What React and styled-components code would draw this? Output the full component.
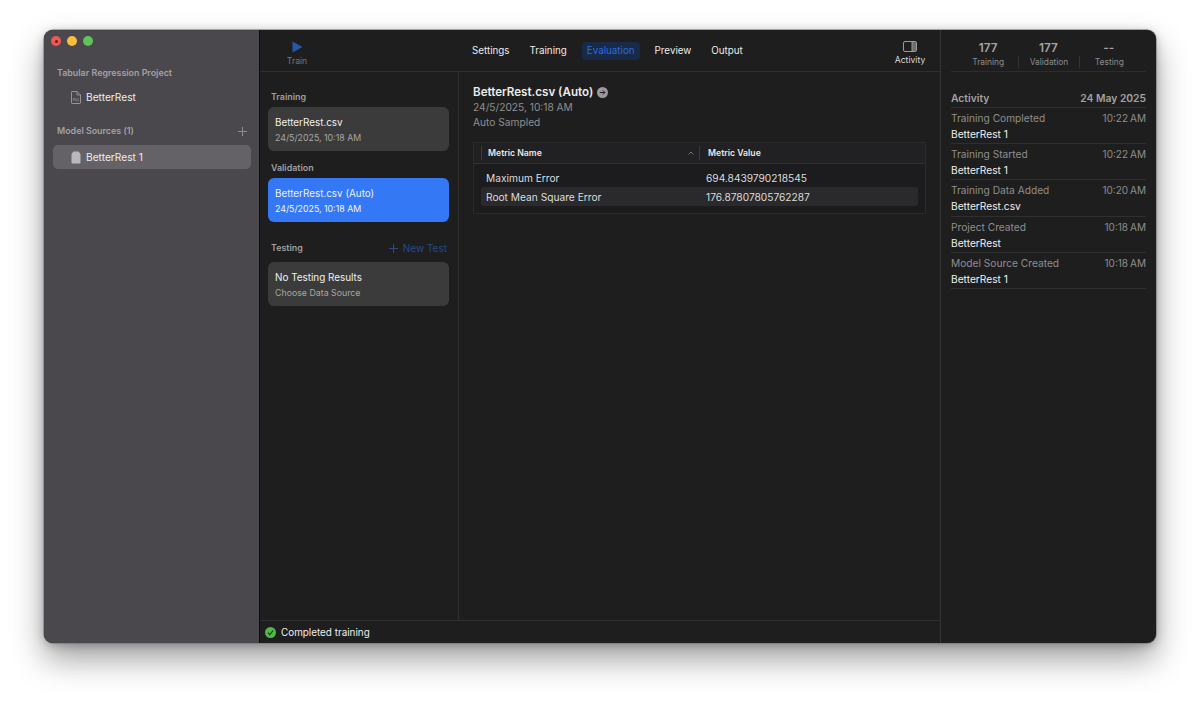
import React from "react";
import styled, { createGlobalStyle } from "styled-components";

const Global = createGlobalStyle`
  html, body { margin: 0; padding: 0; background: #fff; }
  body { font-family: Inter, "Liberation Sans", sans-serif; -webkit-font-smoothing: antialiased; }
  * { box-sizing: border-box; }
`;

const Page = styled.div`
  width: 1200px;
  height: 702px;
  padding: 30px 44px 59px;
  overflow: hidden;
`;
const Win = styled.div`
  display: flex;
  height: 613px;
  border-radius: 9px;
  overflow: hidden;
  background: #1e1e1e;
  box-shadow: 0 0 1px #666, 0 0 0 0.5px #77777a, 0 16px 32px rgba(0,0,0,.38), 0 2px 10px rgba(0,0,0,.25);
`;
const Sidebar = styled.aside`
  width: 216px;
  flex: none;
  background: #4a484d;
  border-right: 1px solid #0c0c0c;
  padding: 0 8px 0 9px;
  display: flex;
  flex-direction: column;
`;
const Lights = styled.div`
  display: flex;
  gap: 6px;
  margin-left: -2px;
  padding-top: 6px;
  height: 37px;
`;
const Light = styled.span`
  width: 10px;
  height: 10px;
  border-radius: 50%;
  background: ${p => p.$c};
  display: flex;
  align-items: center;
  justify-content: center;
  &::after {
    content: "";
    width: 3px;
    height: 3px;
    border-radius: 50%;
    background: ${p => (p.$dot ? "#7c1512" : "transparent")};
  }
`;
const SideHead = styled.div`
  display: flex;
  justify-content: space-between;
  align-items: center;
  padding: 0 4px 0 4px;
  height: 12px;
  font-size: 8.9px;
  line-height: 12px;
  font-weight: 600;
  color: #a3a1a5;
  margin-top: ${p => p.$mt || 0}px;
`;
const SideRow = styled.div`
  display: flex;
  align-items: center;
  gap: 5px;
  height: 24px;
  padding-left: 18px;
  border-radius: 5px;
  font-size: 10.2px;
  color: #eeedee;
  background: ${p => (p.$active ? "#646267" : "transparent")};
  margin-top: ${p => p.$mt || 0}px;
`;
const Main = styled.div`
  width: 681px;
  flex: none;
  display: flex;
  flex-direction: column;
  border-right: 1px solid #343434;
`;
const Toolbar = styled.header`
  height: 42px;
  flex: none;
  border-bottom: 1px solid #2f2f2f;
  display: flex;
  align-items: stretch;
  padding: 0 13px 0 27px;
`;
const ToolBtn = styled.div`
  display: flex;
  flex-direction: column;
  align-items: center;
  justify-content: flex-start;
  width: ${p => p.$w}px;
  padding-top: ${p => p.$pt}px;
  gap: ${p => p.$gap}px;
  font-size: 8.6px;
  line-height: 11px;
  color: ${p => p.$c};
`;
const Tabs = styled.nav`
  flex: 1;
  display: flex;
  align-items: center;
  gap: 10px;
  padding: 0 0 0 160px;
`;
const Tab = styled.div`
  height: 18px;
  line-height: 18px;
  padding: 0 5px;
  border-radius: 4px;
  font-size: 9.8px;
  color: ${p => (p.$active ? "#2d6bdc" : "#ecebec")};
  background: ${p => (p.$active ? "#182a48" : "transparent")};
`;
const Body = styled.div`
  flex: 1;
  min-height: 0;
  display: flex;
`;
const ListCol = styled.section`
  width: 199px;
  flex: none;
  border-right: 1px solid #2f2f2f;
  padding: 0 9px 0 8px;
  display: flex;
  flex-direction: column;
`;
const ListHead = styled.div`
  display: flex;
  justify-content: space-between;
  align-items: center;
  height: 12px;
  padding: 0 2px 0 3px;
  font-size: 8.9px;
  line-height: 12px;
  font-weight: 600;
  color: #a09fa0;
  margin-top: ${p => p.$mt}px;
  margin-bottom: ${p => p.$mb}px;
`;
const NewTest = styled.span`
  display: flex;
  align-items: center;
  gap: 5px;
  font-size: 10px;
  font-weight: 400;
  color: #254a86;
`;
const Card = styled.div`
  height: 44px;
  border-radius: 6px;
  padding: 8px 7px 0;
  background: ${p => (p.$active ? "#3478f6" : "#3b3b3b")};
`;
const CardTitle = styled.div`
  font-size: 9.9px;
  line-height: 14px;
  color: #f0f0f0;
`;
const CardSub = styled.div`
  font-size: 8.8px;
  line-height: 12px;
  margin-top: 3px;
  color: ${p => (p.$active ? "#f2f6ff" : "#a6a6a6")};
`;
const Detail = styled.section`
  flex: 1;
  padding: 12px 14px 0;
`;
const DetailTitle = styled.h2`
  margin: 0;
  display: flex;
  align-items: center;
  gap: 4px;
  font-size: 11.6px;
  line-height: 16px;
  font-weight: 600;
  color: #ececec;
`;
const DetailSub = styled.div`
  font-size: 10.2px;
  line-height: 15px;
  color: #8f8f8f;
`;
const Table = styled.div`
  margin-top: 12px;
  height: 72px;
  border: 1px solid #2a2a2c;
  background: #1c1c1e;
`;
const THead = styled.div`
  height: 21px;
  display: flex;
  align-items: center;
  background: #212123;
  border-bottom: 1px solid #313133;
  font-size: 8.7px;
  font-weight: 600;
  color: #e6e6e6;
`;
const THCell = styled.div`
  display: flex;
  align-items: center;
  justify-content: space-between;
  height: 14px;
  width: ${p => p.$w}px;
  margin-left: ${p => p.$ml}px;
  padding: 0 5px 0 ${p => p.$pl}px;
  border-left: 1px solid #3c3c3e;
`;
const TRows = styled.div`
  padding: 4px 7px 0 7px;
`;
const TRow = styled.div`
  display: flex;
  align-items: center;
  height: 19px;
  border-radius: 3px;
  padding-left: 5px;
  font-size: 10.2px;
  color: #dcdcdc;
  background: ${p => (p.$alt ? "#2a2a2c" : "transparent")};
`;
const TName = styled.span`
  width: 220px;
`;
const Status = styled.footer`
  height: 23px;
  flex: none;
  border-top: 1px solid #2f2f2f;
  display: flex;
  align-items: center;
  gap: 5px;
  padding-left: 5px;
  font-size: 9.9px;
  color: #eeeeee;
`;
const Right = styled.aside`
  flex: 1;
  min-width: 0;
  padding: 0 10px;
`;
const Stats = styled.div`
  height: 42px;
  display: flex;
  border-bottom: 1px solid #2c2c2c;
  padding: 12px 7px 0;
`;
const Stat = styled.div`
  flex: 1;
  text-align: center;
`;
const StatNum = styled.div`
  font-size: 11.8px;
  line-height: 13px;
  font-weight: 600;
  color: #a4a4a4;
`;
const StatLabel = styled.div`
  font-size: 8.4px;
  line-height: 12px;
  margin-top: 1px;
  color: #8c8c8c;
  border-left: ${p => (p.$sep ? "1px solid #333" : "0")};
`;
const ActHead = styled.div`
  margin-top: 16.5px;
  height: 19px;
  display: flex;
  justify-content: space-between;
  font-size: 10.3px;
  line-height: 18px;
  font-weight: 600;
  color: #a2a2a2;
  border-bottom: 1px solid #2f2f2f;
`;
const ActRow = styled.div`
  height: 36.4px;
  padding-top: 2px;
  border-bottom: 1px solid #2f2f2f;
`;
const ActLine = styled.div`
  display: flex;
  justify-content: space-between;
  font-size: 10.2px;
  line-height: 16px;
  color: #8e8e8e;
`;
const ActTime = styled.span`
  font-size: 10px;
  word-spacing: -0.8px;
`;
const ActSub = styled.div`
  font-size: 10.2px;
  line-height: 16px;
  color: #f0f0f0;
`;

const Plus = ({ c, s = 9 }) => (
  <svg width={s} height={s} viewBox="0 0 9 9">
    <path d="M4.5 0v9M0 4.5h9" stroke={c} strokeWidth="1" fill="none" />
  </svg>
);

const activity = [
  ["Training Completed", "10:22 AM", "BetterRest 1"],
  ["Training Started", "10:22 AM", "BetterRest 1"],
  ["Training Data Added", "10:20 AM", "BetterRest.csv"],
  ["Project Created", "10:18 AM", "BetterRest"],
  ["Model Source Created", "10:18 AM", "BetterRest 1"],
];

export default function App() {
  return (
    <Page>
      <Global />
      <Win>
        <Sidebar>
          <Lights>
            <Light $c="#ee5a52" $dot />
            <Light $c="#f6bd3f" />
            <Light $c="#5fc454" />
          </Lights>
          <SideHead>Tabular Regression Project</SideHead>
          <SideRow $mt={6}>
            <svg width="10" height="13" viewBox="0 0 10 13" fill="none">
              <path d="M.5 1.2C.5.8.8.5 1.2.5H6L9.5 4v7.8c0 .4-.3.7-.7.7H1.2c-.4 0-.7-.3-.7-.7V1.2Z" stroke="#a9a8ab" strokeWidth=".8" />
              <path d="M6 .5V4h3.5" stroke="#a9a8ab" strokeWidth=".7" />
              <path d="M2 9.8 3 7l1 2.8M5 7v2.8h1M7 7v2.8h1" stroke="#9b9a9d" strokeWidth=".6" />
            </svg>
            BetterRest
          </SideRow>
          <SideHead $mt={16}>
            Model Sources (1)
            <Plus c="#8f8d92" />
          </SideHead>
          <SideRow $active $mt={8}>
            <svg width="10" height="13" viewBox="0 0 10 13">
              <path d="M2.5 .5h5L9 2.2c.3.3.5.7.5 1.1v8.2c0 .6-.4 1-1 1h-7c-.6 0-1-.4-1-1V3.3c0-.4.2-.8.5-1.1L2.5 .5Z" fill="#b9b8bb" />
            </svg>
            BetterRest 1
          </SideRow>
        </Sidebar>
        <Main>
          <Toolbar>
            <ToolBtn $w={20} $pt={11} $gap={3} $c="#77777a">
              <svg width="11" height="12" viewBox="0 0 11 12">
                <path d="M.5.5 10.5 6 .5 11.5Z" fill="#2857a8" />
              </svg>
              Train
            </ToolBtn>
            <Tabs>
              <Tab>Settings</Tab>
              <Tab>Training</Tab>
              <Tab $active>Evaluation</Tab>
              <Tab>Preview</Tab>
              <Tab>Output</Tab>
            </Tabs>
            <ToolBtn $w={34} $pt={11} $gap={3} $c="#dcdcdc">
              <svg width="14" height="11" viewBox="0 0 14 11" fill="none">
                <rect x=".5" y=".5" width="13" height="10" rx="1.5" stroke="#9a9a9a" />
                <rect x="9" y="1" width="4" height="9" fill="#6d6d6d" />
                <path d="M9 .5v10" stroke="#9a9a9a" />
              </svg>
              Activity
            </ToolBtn>
          </Toolbar>
          <Body>
            <ListCol>
              <ListHead $mt={19} $mb={4}>Training</ListHead>
              <Card>
                <CardTitle>BetterRest.csv</CardTitle>
                <CardSub>24/5/2025, 10:18 AM</CardSub>
              </Card>
              <ListHead $mt={11} $mb={4}>Validation</ListHead>
              <Card $active>
                <CardTitle>BetterRest.csv (Auto)</CardTitle>
                <CardSub $active>24/5/2025, 10:18 AM</CardSub>
              </Card>
              <ListHead $mt={20} $mb={8}>
                Testing
                <NewTest>
                  <Plus c="#254a86" />
                  New Test
                </NewTest>
              </ListHead>
              <Card>
                <CardTitle>No Testing Results</CardTitle>
                <CardSub>Choose Data Source</CardSub>
              </Card>
            </ListCol>
            <Detail>
              <DetailTitle>
                BetterRest.csv (Auto)
                <svg width="11" height="11" viewBox="0 0 11 11">
                  <circle cx="5.5" cy="5.5" r="5.5" fill="#9a9a9a" />
                  <path d="M2.8 5.5h5M5.8 3.4l2.1 2.1-2.1 2.1" stroke="#1e1e1e" strokeWidth="1" fill="none" />
                </svg>
              </DetailTitle>
              <DetailSub>24/5/2025, 10:18 AM</DetailSub>
              <DetailSub>Auto Sampled</DetailSub>
              <Table>
                <THead>
                  <THCell $w={218} $ml={7} $pl={6}>
                    Metric Name
                    <svg width="6" height="4" viewBox="0 0 6 4" fill="none">
                      <path d="M.5 3.5 3 1l2.5 2.5" stroke="#888" strokeWidth=".8" />
                    </svg>
                  </THCell>
                  <THCell $w={200} $ml={0} $pl={8}>Metric Value</THCell>
                </THead>
                <TRows>
                  <TRow><TName>Maximum Error</TName>694.8439790218545</TRow>
                  <TRow $alt><TName>Root Mean Square Error</TName>176.87807805762287</TRow>
                </TRows>
              </Table>
            </Detail>
          </Body>
          <Status>
            <svg width="11" height="11" viewBox="0 0 11 11">
              <circle cx="5.5" cy="5.5" r="5.5" fill="#4fb848" />
              <path d="M3 5.7 4.8 7.6 8 3.6" stroke="#173f18" strokeWidth="1.1" fill="none" />
            </svg>
            Completed training
          </Status>
        </Main>
        <Right>
          <Stats>
            <Stat><StatNum>177</StatNum><StatLabel>Training</StatLabel></Stat>
            <Stat><StatNum>177</StatNum><StatLabel $sep>Validation</StatLabel></Stat>
            <Stat><StatNum>--</StatNum><StatLabel $sep>Testing</StatLabel></Stat>
          </Stats>
          <ActHead><span>Activity</span><span>24 May 2025</span></ActHead>
          {activity.map(([a, t, s]) => (
            <ActRow key={a}>
              <ActLine><span>{a}</span><ActTime>{t}</ActTime></ActLine>
              <ActSub>{s}</ActSub>
            </ActRow>
          ))}
        </Right>
      </Win>
    </Page>
  );
}
